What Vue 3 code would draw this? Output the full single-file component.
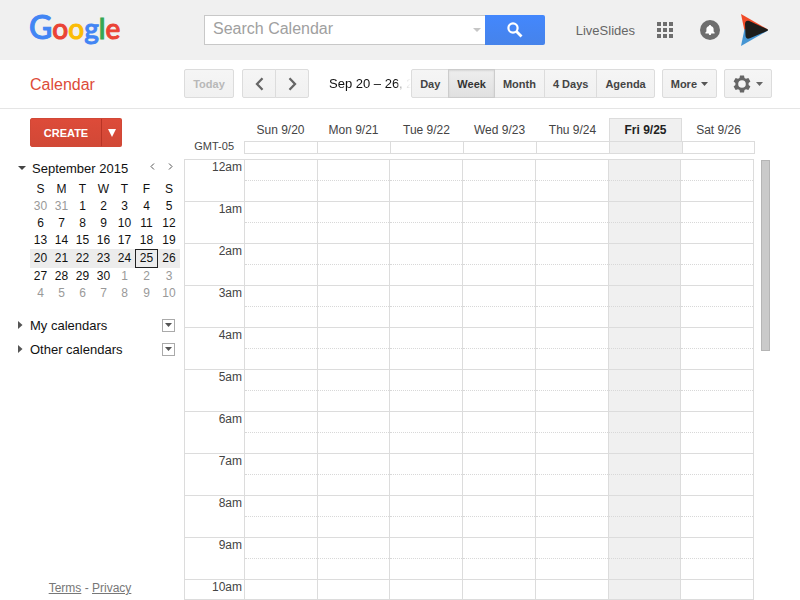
<script setup>
import { ref } from 'vue'

const query = ref('')
const activeView = ref('Week')
const views = ['Day', 'Week', 'Month', '4 Days', 'Agenda']

const weekdays = ['S', 'M', 'T', 'W', 'T', 'F', 'S']
const weeks = [
  [30, 31, 1, 2, 3, 4, 5],
  [6, 7, 8, 9, 10, 11, 12],
  [13, 14, 15, 16, 17, 18, 19],
  [20, 21, 22, 23, 24, 25, 26],
  [27, 28, 29, 30, 1, 2, 3],
  [4, 5, 6, 7, 8, 9, 10]
]
const currentWeek = 3
const isOutside = (w, d) => (w === 0 && d > 20) || (w > 3 && d < 15)
const isToday = (w, d) => w === currentWeek && d === 25

const days = ['Sun 9/20', 'Mon 9/21', 'Tue 9/22', 'Wed 9/23', 'Thu 9/24', 'Fri 9/25', 'Sat 9/26']
const todayIndex = 5
const hours = ['12am', '1am', '2am', '3am', '4am', '5am', '6am', '7am', '8am', '9am', '10am']
const calendarLists = ['My calendars', 'Other calendars']
</script>

<template>
  <div class="page">
    <header class="topbar">
      <a class="logo" href="#" aria-label="Google"><span class="blue initial">G</span><span class="red">o</span><span class="yellow">o</span><span class="blue">g</span><span class="green">l</span><span class="red">e</span></a>
      <form class="search" role="search" @submit.prevent>
        <div class="search-field">
          <input v-model="query" type="text" placeholder="Search Calendar" aria-label="Search Calendar" />
          <button type="button" class="search-options" aria-label="Search options">
            <svg width="8" height="4" viewBox="0 0 8 4"><path d="M0 0h8L4 4z" fill="#c6c6c6" /></svg>
          </button>
        </div>
        <button type="submit" class="search-button" aria-label="Search">
          <svg width="16" height="16" viewBox="0 0 16 16" fill="none" stroke="#fff">
            <circle cx="6" cy="6" r="4.6" stroke-width="2.2" />
            <path d="M9.5 9.5l5 5" stroke-width="2.8" />
          </svg>
        </button>
      </form>
      <nav class="account">
        <a class="user" href="#">LiveSlides</a>
        <button type="button" class="icon-button apps" aria-label="Apps">
          <svg width="16" height="16" viewBox="0 0 16 16" fill="#6e6e6e">
            <path d="M0 0h4v4H0zM6 0h4v4H6zM12 0h4v4h-4zM0 6h4v4H0zM6 6h4v4H6zM12 6h4v4h-4zM0 12h4v4H0zM6 12h4v4H6zM12 12h4v4h-4z" />
          </svg>
        </button>
        <button type="button" class="icon-button bell" aria-label="Notifications">
          <svg width="20" height="20" viewBox="0 0 20 20">
            <circle cx="10" cy="10" r="10" fill="#6e6e6e" />
            <path d="M10 5c.7 0 1 .4 1 .9 1.700.4 2.600 1.600 2.600 3.200v2.500l1 1v1H5.400v-1l1-1V9.100c0-1.600.9-2.800 2.600-3.200 0-.5.3-.9 1-.9zM8.800 13.500h2.400c0 1-.5 1.500-1.200 1.500s-1.200-.5-1.200-1.500z" fill="#fff" />
          </svg>
        </button>
        <button type="button" class="icon-button" aria-label="Account">
          <svg width="29" height="32" viewBox="0 0 29 32">
            <path d="M1 0L28 15.500 4.500 17z" fill="#f04a27" />
            <path d="M1 32L28 16.500 4.500 15z" fill="#4595d3" />
            <path d="M5 10c0-2.800 2-4 4.300-2.900L27.500 15.200c.7.400.7 1.200 0 1.600L9.800 24.300c-2.600 1-4.200-.2-4.300-2.800z" fill="#1d1d1b" />
          </svg>
        </button>
      </nav>
    </header>

    <div class="toolbar">
      <h1>Calendar</h1>
      <button type="button" class="btn today-button" disabled>Today</button>
      <div class="group pager">
        <button type="button" class="btn" aria-label="Previous week">
          <svg width="9" height="14" viewBox="0 0 9 14"><path d="M7.500 1.200L2 7l5.500 5.800" fill="none" stroke="#666" stroke-width="2.300" /></svg>
        </button>
        <button type="button" class="btn" aria-label="Next week">
          <svg width="9" height="14" viewBox="0 0 9 14"><path d="M1.500 1.200L7 7l-5.500 5.800" fill="none" stroke="#666" stroke-width="2.300" /></svg>
        </button>
      </div>
      <div class="range">Sep 20 – 26, 2015</div>
      <div class="group views">
        <button
          v-for="view in views"
          :key="view"
          type="button"
          class="btn"
          :class="{ active: view === activeView }"
          @click="activeView = view"
        >{{ view }}</button>
      </div>
      <button type="button" class="btn more">More <svg width="7" height="4" viewBox="0 0 7 4"><path d="M0 0h7L3.500 4z" fill="#555" /></svg></button>
      <button type="button" class="btn gear" aria-label="Settings">
        <svg width="18" height="18" viewBox="0 0 18 18">
          <path fill="#666" fill-rule="evenodd" d="M7 .5h4l.5 2.400 1.500.9 2.400-.8 2 3.400-1.800 1.700v1.800l1.800 1.700-2 3.400-2.400-.8-1.500.9-.5 2.400H7l-.5-2.400-1.500-.9-2.400.8-2-3.400 1.800-1.700V8.100L.6 6.400l2-3.400 2.400.8 1.500-.9zM9 5.200a3.800 3.800 0 1 0 0 7.600 3.800 3.800 0 0 0 0-7.600z" />
        </svg>
        <svg width="7" height="4" viewBox="0 0 7 4"><path d="M0 0h7L3.500 4z" fill="#666" /></svg>
      </button>
    </div>

    <div class="content">
      <aside class="sidebar">
        <div class="create">
          <button type="button" class="create-main">CREATE</button>
          <button type="button" class="create-more" aria-label="Create options">
            <svg width="8" height="8" viewBox="0 0 8 8"><path d="M0 0h8L4 8z" fill="#fff" /></svg>
          </button>
        </div>

        <div class="month-head">
          <button type="button" class="plain" aria-label="Collapse month">
            <svg width="8" height="4" viewBox="0 0 8 4"><path d="M0 0h8L4 4z" fill="#444" /></svg>
          </button>
          <h2>September 2015</h2>
          <button type="button" class="plain step" aria-label="Previous month">
            <svg width="5" height="7" viewBox="0 0 5 7"><path d="M4 .5L1 3.500l3 3" fill="none" stroke="#555" /></svg>
          </button>
          <button type="button" class="plain step" aria-label="Next month">
            <svg width="5" height="7" viewBox="0 0 5 7"><path d="M1 .5l3 3-3 3" fill="none" stroke="#555" /></svg>
          </button>
        </div>

        <table class="mini">
          <thead>
            <tr><th v-for="(d, i) in weekdays" :key="i" scope="col">{{ d }}</th></tr>
          </thead>
          <tbody>
            <tr v-for="(week, w) in weeks" :key="w" :class="{ current: w === currentWeek }">
              <td v-for="d in week" :key="d" :class="{ outside: isOutside(w, d), today: isToday(w, d) }">{{ d }}</td>
            </tr>
          </tbody>
        </table>

        <ul class="lists">
          <li v-for="name in calendarLists" :key="name">
            <button type="button" class="plain list-name">
              <svg width="5" height="8" viewBox="0 0 5 8"><path d="M0 0l4.500 4L0 8z" fill="#555" /></svg>{{ name }}
            </button>
            <button type="button" class="list-menu" :aria-label="name + ' options'">
              <svg width="7" height="4" viewBox="0 0 7 4"><path d="M0 0h7L3.500 4z" fill="#555" /></svg>
            </button>
          </li>
        </ul>

        <footer class="legal"><a href="#">Terms</a> - <a href="#">Privacy</a></footer>
      </aside>

      <main class="week">
        <table class="week-head">
          <thead>
            <tr>
              <td class="axis"></td>
              <th v-for="(day, i) in days" :key="day" scope="col" :class="{ today: i === todayIndex }">{{ day }}</th>
            </tr>
          </thead>
          <tbody>
            <tr class="all-day">
              <th class="axis" scope="row">GMT-05</th>
              <td v-for="(day, i) in days" :key="day" :class="{ today: i === todayIndex }"></td>
            </tr>
          </tbody>
        </table>
        <div class="scroll-area">
          <div class="viewport">
            <table class="hours">
              <tbody>
                <tr v-for="hour in hours" :key="hour">
                  <th class="axis" scope="row">{{ hour }}</th>
                  <td v-for="(day, i) in days" :key="day" :class="{ today: i === todayIndex }"><div class="half"></div></td>
                </tr>
              </tbody>
            </table>
          </div>
          <div class="track"><div class="thumb"></div></div>
        </div>
      </main>
    </div>
  </div>
</template>

<style>
body {
  margin: 0;
  background: #fff;
}
</style>

<style scoped>
.page {
  display: flex;
  flex-direction: column;
  height: 100vh;
  overflow: hidden;
  font-family: "Liberation Sans", Arial, sans-serif;
  font-size: 13px;
  color: #111;
}
.page *,
.page {
  box-sizing: border-box;
}
button,
input {
  font-family: inherit;
  margin: 0;
  padding: 0;
}
button {
  cursor: pointer;
}
svg {
  display: block;
  flex: none;
}
h1,
h2,
ul {
  margin: 0;
  padding: 0;
  font-weight: normal;
}
th {
  font-weight: normal;
}
table {
  border-spacing: 0;
  table-layout: fixed;
}
th,
td {
  padding: 0;
}

/* top bar */
.topbar {
  display: flex;
  align-items: center;
  flex: none;
  height: 60px;
  padding: 0 31px 0 29px;
  background: #f0f0f0;
}
.logo {
  flex: none;
  width: 175px;
  padding-bottom: 6px;
  font-family: Lato, sans-serif;
  font-size: 28px;
  font-weight: 500;
  line-height: 40px;
  text-decoration: none;
  -webkit-text-stroke: 1px currentColor;
}
.initial {
  font-size: 32px;
}
.blue { color: #4285f4; }
.red { color: #ea4335; }
.yellow { color: #fbbc05; }
.green { color: #34a853; }
.search {
  display: flex;
  flex: 1;
  height: 30px;
}
.search-field {
  display: flex;
  align-items: center;
  flex: 1;
  min-width: 0;
  border: 1px solid #c8c8c8;
  border-right: 0;
  background: #fff;
}
.search-field input {
  flex: 1;
  min-width: 0;
  height: 26px;
  padding: 0 8px;
  border: 0;
  outline: 0;
  background: none;
  font-size: 16px;
  align-self: flex-start;
}
.search-field input::placeholder {
  color: #a0a0a0;
  opacity: 1;
}
.search-options {
  padding: 4px;
  border: 0;
  background: none;
}
.search-button {
  display: flex;
  align-items: center;
  justify-content: center;
  width: 60px;
  border: 0;
  border-radius: 0 2px 2px 0;
  background: linear-gradient(#4387fd, #4683ea);
}
.account {
  display: flex;
  align-items: center;
  margin-left: 31px;
}
.user {
  color: #666;
  text-decoration: none;
}
.icon-button {
  border: 0;
  background: none;
}
.apps {
  margin-left: 22px;
}
.bell {
  margin: 0 20px 0 27px;
}

/* toolbar */
.toolbar {
  display: flex;
  align-items: center;
  flex: none;
  height: 49px;
  padding: 0 28px 1px 30px;
  border-bottom: 1px solid #e5e5e5;
}
h1 {
  flex: none;
  width: 154px;
  padding-top: 2px;
  font-size: 16px;
  color: #dd4b39;
}
.btn {
  display: flex;
  align-items: center;
  justify-content: center;
  flex: none;
  height: 29px;
  padding: 0 8px;
  border: 1px solid #dcdcdc;
  border-radius: 2px;
  background: linear-gradient(#f5f5f5, #f1f1f1);
  font-size: 11px;
  font-weight: bold;
  color: #444;
}
.today-button {
  width: 50px;
  color: #b8b8b8;
}
.group {
  display: flex;
  flex: none;
}
.group .btn + .btn {
  margin-left: -1px;
}
.group .btn:not(:last-child) {
  border-top-right-radius: 0;
  border-bottom-right-radius: 0;
}
.group .btn:not(:first-child) {
  border-top-left-radius: 0;
  border-bottom-left-radius: 0;
}
.pager {
  margin: 0 20px 0 8px;
}
.pager .btn {
  width: 34px;
}
.btn.active {
  z-index: 1;
  border-color: #ccc;
  background: linear-gradient(#eee, #e0e0e0);
  box-shadow: inset 0 1px 2px rgba(0, 0, 0, 0.1);
  color: #333;
}
.range {
  flex: 1;
  min-width: 0;
  overflow: hidden;
  white-space: nowrap;
  mask-image: linear-gradient(to right, #000 calc(100% - 14px), rgba(0, 0, 0, 0.4) calc(100% - 12px), transparent);
}
.more {
  gap: 4px;
  margin: 0 7px;
}
.gear {
  gap: 5px;
  width: 48px;
}

/* sidebar */
.content {
  display: flex;
  flex: 1;
  min-height: 0;
}
.sidebar {
  display: flex;
  flex-direction: column;
  flex: none;
  width: 184px;
  padding-top: 9px;
}
.create {
  display: flex;
  align-self: flex-start;
  margin-left: 30px;
  height: 29px;
}
.create button {
  border: 1px solid #d14836;
  background: linear-gradient(#dd4b39, #d14836);
  color: #fff;
  font-size: 11px;
  font-weight: bold;
}
.create-main {
  width: 72px;
  border-radius: 2px 0 0 2px;
}
.create .create-more {
  display: flex;
  align-items: center;
  justify-content: center;
  width: 21px;
  margin-left: -1px;
  border-left-color: #b93425;
  border-radius: 0 2px 2px 0;
}
.month-head {
  display: flex;
  align-items: center;
  margin-top: 12px;
  padding: 0 11px 0 18px;
  height: 18px;
}
.plain {
  border: 0;
  background: none;
  color: inherit;
}
.month-head h2 {
  flex: 1;
  margin-left: 6px;
  font-size: 13px;
}
.step {
  margin-bottom: 4px;
  margin-left: 13px;
}
.mini {
  width: 150px;
  margin: 3px 0 0 30px;
  font-size: 12px;
  text-align: center;
}
.mini th {
  height: 18px;
  width: 21px;
  line-height: 16px;
}
.mini th:nth-child(6) {
  width: 23px;
}
.mini th:nth-child(7) {
  width: 22px;
}
.mini td {
  height: 17px;
  line-height: 15px;
}
.mini .outside {
  color: #999;
}
.mini .current td {
  height: 19px;
  background: #ececec;
}
.mini .current .today {
  border: 1px solid #222;
}
.lists {
  margin-top: 11px;
  list-style: none;
}
.lists li {
  display: flex;
  align-items: center;
  justify-content: space-between;
  height: 24px;
  padding: 0 9px 0 18px;
}
.list-name {
  display: flex;
  align-items: center;
  gap: 7px;
  font-size: 13px;
}
.list-menu {
  display: flex;
  align-items: center;
  justify-content: center;
  width: 13px;
  height: 13px;
  border: 1px solid #aaa;
  background: #fff;
}
.legal {
  margin-top: auto;
  padding: 0 4px 4px 0;
  font-size: 12px;
  line-height: 16px;
  text-align: center;
  color: #777;
}
.legal a {
  color: #777;
}

/* week view */
.week {
  display: flex;
  flex-direction: column;
  flex: 1;
  min-width: 0;
  padding: 9px 30px 0 0;
}
.week table {
  font-size: 12px;
  color: #444;
}
.axis {
  width: 60px;
}
.week-head {
  width: calc(100% - 15px);
}
.week-head thead th {
  height: 23px;
  border-top: 1px solid transparent;
}
.week-head thead .today {
  border: 1px solid #dcdcdc;
  border-bottom: 0;
  background: #f0f0f0;
  color: #222;
  font-weight: bold;
}
.all-day td {
  height: 13px;
  border: 1px solid #dcdcdc;
  border-right: 0;
}
.all-day td:last-child {
  border-right: 1px solid #dcdcdc;
}
.all-day .today {
  background: #f0f0f0;
}
.all-day .axis {
  padding: 0 10px 3px 0;
  font-size: 11px;
  line-height: 10px;
  text-align: right;
}
.scroll-area {
  display: flex;
  flex: 1;
  min-height: 0;
  margin-top: 5px;
}
.viewport {
  flex: 1;
  overflow: hidden;
  border-bottom: 1px solid #dcdcdc;
}
.hours {
  width: 100%;
  border-right: 1px solid #dcdcdc;
}
.hours th,
.hours td {
  height: 42px;
  border-top: 1px solid #dcdcdc;
  border-left: 1px solid #dcdcdc;
  vertical-align: top;
}
.hours .axis {
  padding-right: 2px;
  line-height: 14px;
  text-align: right;
}
.hours .today {
  background: #f0f0f0;
}
.half {
  height: 21px;
  border-bottom: 1px dotted #d8d8d8;
}
.track {
  width: 9px;
  margin: 1px 0 0 7px;
}
.thumb {
  height: 191px;
  border: 1px solid #b5b5b5;
  background: #cacaca;
}
</style>
